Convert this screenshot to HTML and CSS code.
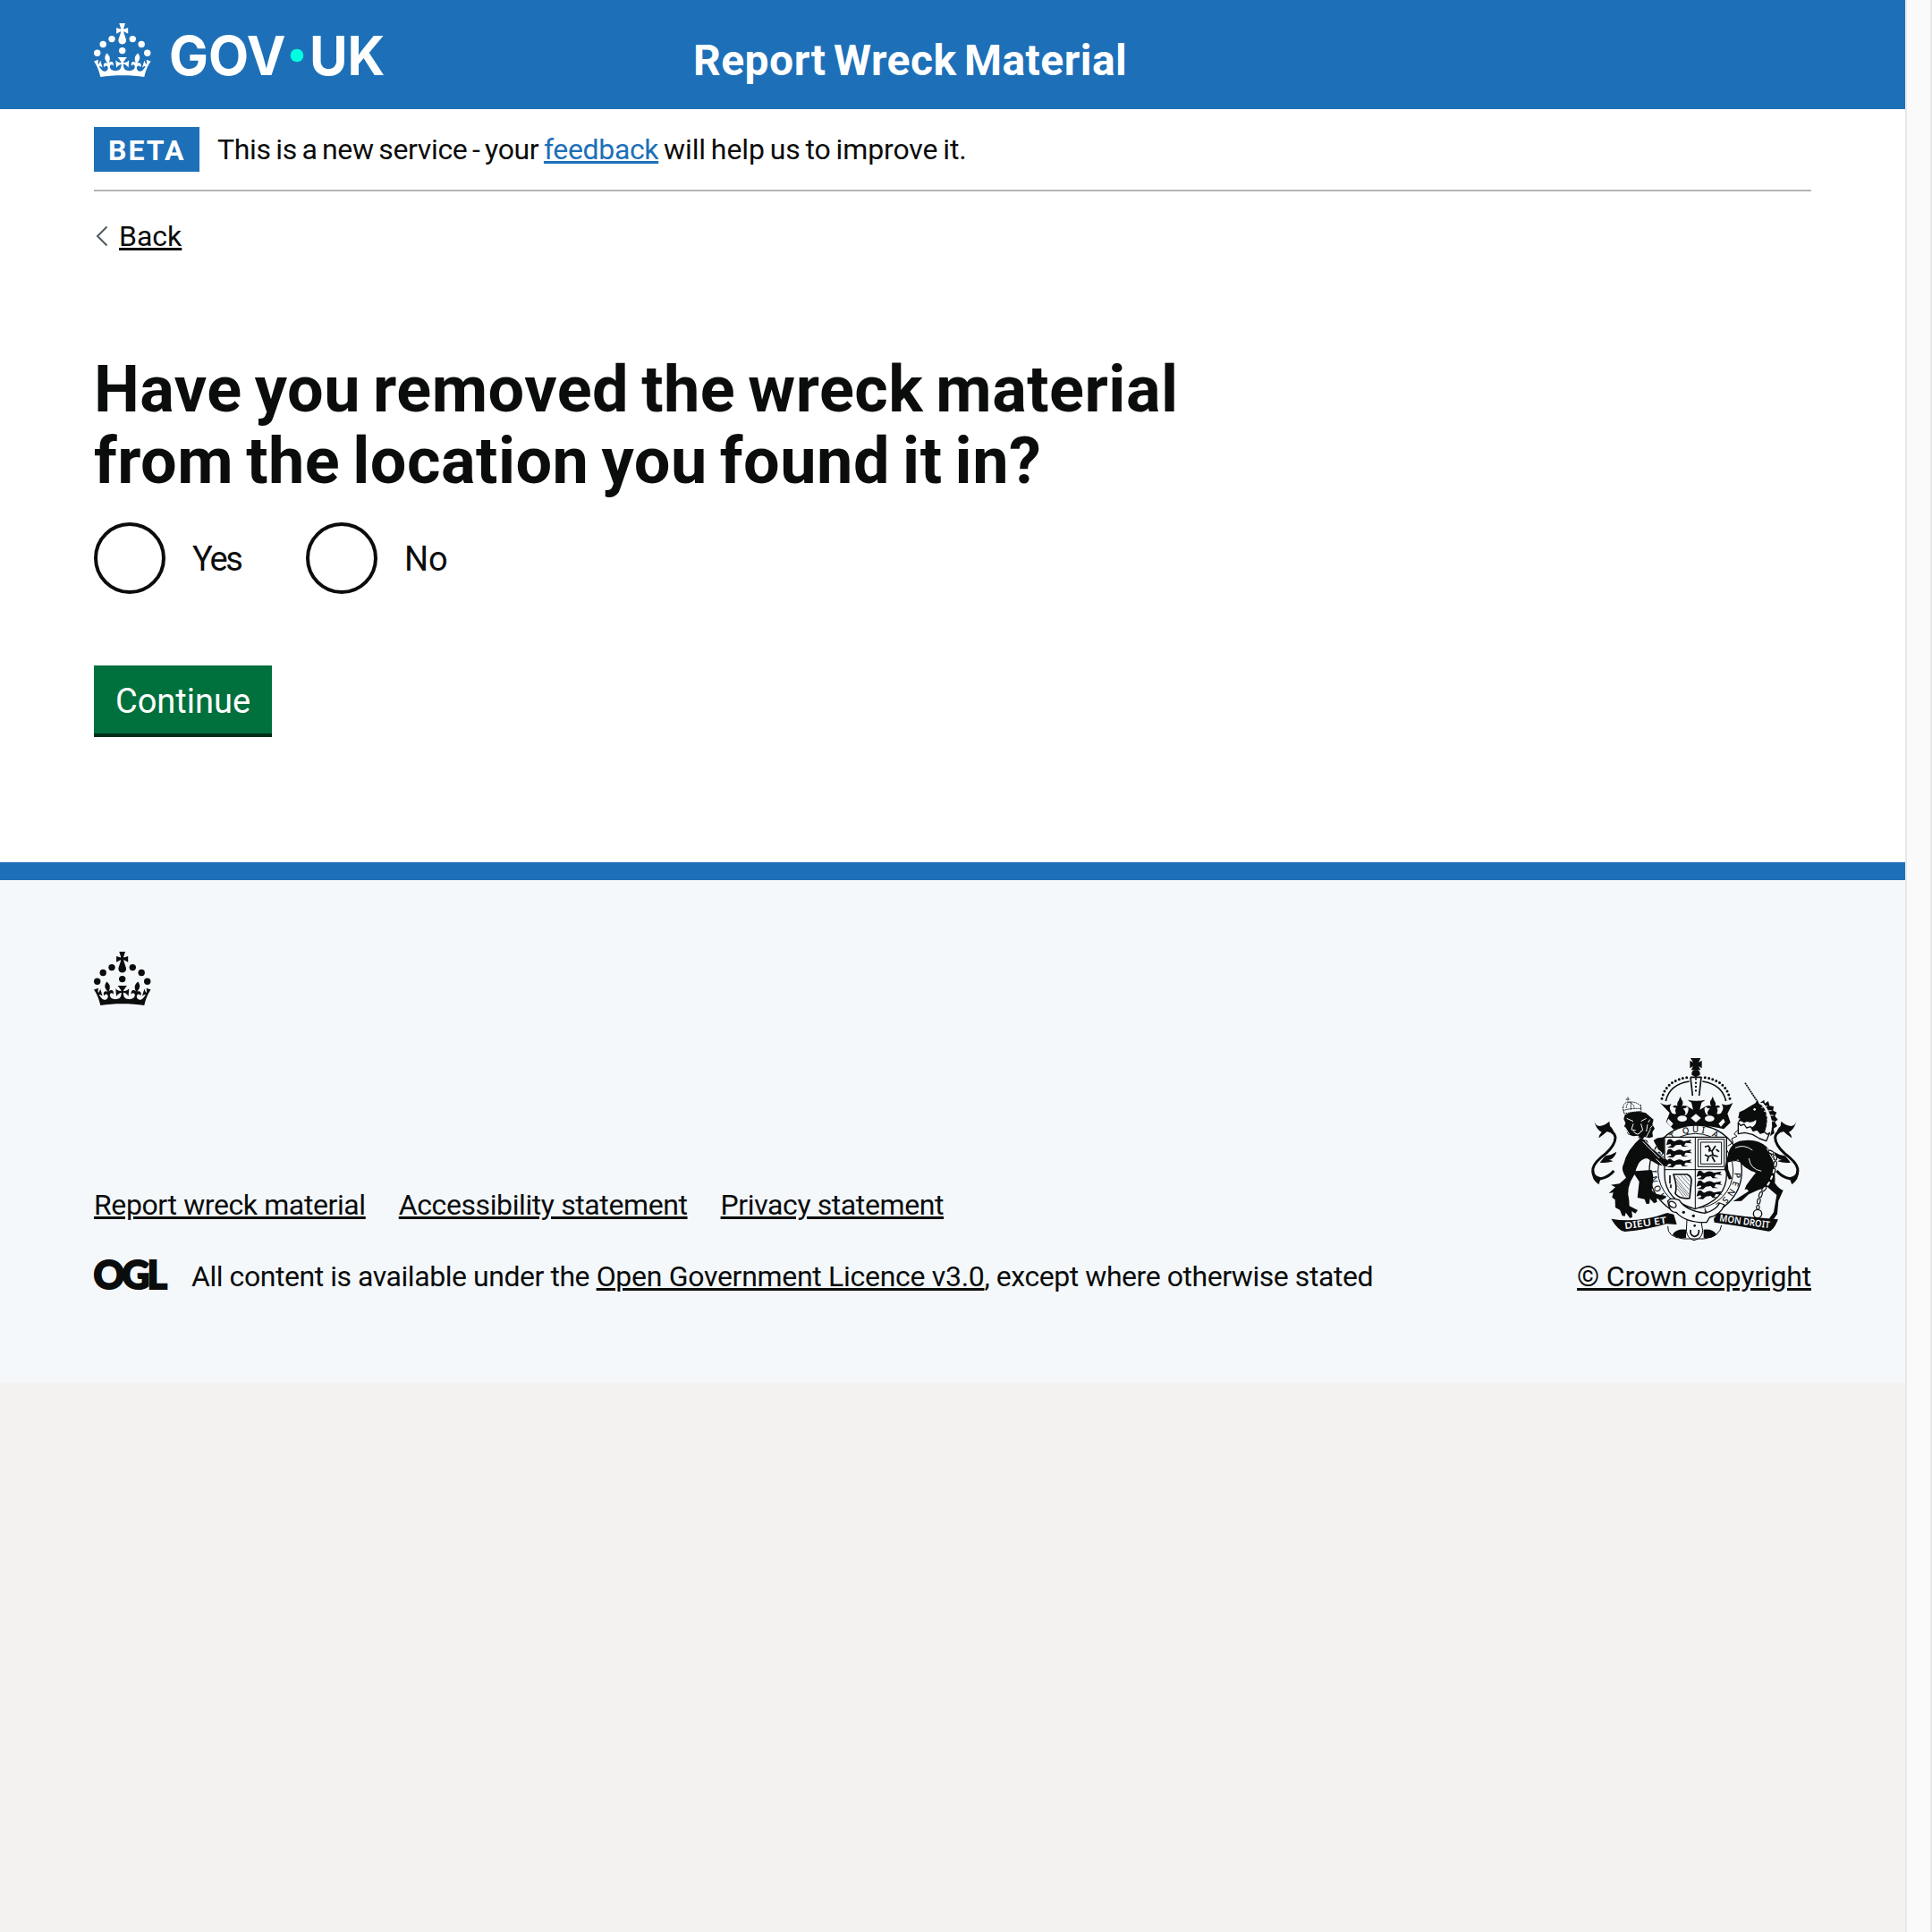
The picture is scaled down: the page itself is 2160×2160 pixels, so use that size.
FILE: index.html
```html
<!DOCTYPE html>
<html lang="en">
<head>
<meta charset="utf-8">
<title>Report Wreck Material</title>
<link rel="stylesheet" href="styles.css">
</head>
<body>
<svg class="symbols" aria-hidden="true">
  <symbol id="crown" viewBox="0 0 64 60">
    <circle cx="20" cy="17.6" r="3.7"/><circle cx="10.2" cy="23.5" r="3.7"/><circle cx="3.7" cy="33.2" r="3.7"/>
    <circle cx="31.7" cy="30.6" r="3.7"/><circle cx="43.3" cy="17.6" r="3.7"/><circle cx="53.2" cy="23.5" r="3.7"/><circle cx="59.7" cy="33.2" r="3.7"/>
    <path d="M33.1,9.8c.2-.1.3-.3.5-.5l4.6,2.4v-6.8l-4.6,1.5c-.1-.2-.3-.3-.5-.5l1.9-5.9h-6.7l1.9,5.9c-.2.1-.3.3-.5.5l-4.6-1.5v6.8l4.6-2.4c.1.2.3.3.5.5l-2.6,8c-.9,2.8,1.2,5.7,4.1,5.7h0c3,0,5.1-2.9,4.1-5.7l-2.6-8ZM37,37.9s-3.4,3.8-4.1,6.1c2.2,0,4.2-.5,6.4-2.8l-.7,8.5c-2-2.8-4.4-4.1-5.7-3.8.1,3.1.5,6.7,5.8,7.2,3.7.3,6.7-1.5,7-3.8.4-2.6-2-4.3-3.7-1.6-1.4-4.5,2.4-6.1,4.9-3.2-1.9-4.5-1.8-7.7,2.4-10.9,3,4,2.6,7.3-1.2,11.1,2.4-1.3,6.2,0,4,4.6-1.2-2.8-3.7-2.2-4.2.2-.3,1.7.7,3.7,3,4.2,1.9.3,4.7-.9,7-5.9-1.3,0-2.4.7-3.9,1.7l2.4-8c.6,2.3,1.4,3.7,2.2,4.5.6-1.6.5-2.8,0-5.3l5,1.8c-2.6,3.6-5.2,8.7-7.3,17.5-7.4-1.1-15.7-1.7-24.5-1.7h0c-8.8,0-17.1.6-24.5,1.7-2.1-8.9-4.7-13.9-7.3-17.5l5-1.8c-.5,2.5-.6,3.7,0,5.3.8-.8,1.6-2.3,2.2-4.5l2.4,8c-1.5-1-2.6-1.7-3.9-1.7,2.3,5,5.2,6.2,7,5.9,2.3-.4,3.3-2.4,3-4.2-.5-2.4-3-3.1-4.2-.2-2.2-4.6,1.6-6,4-4.6-3.7-3.7-4.2-7.1-1.2-11.1,4.2,3.2,4.3,6.4,2.4,10.9,2.5-2.8,6.3-1.3,4.9,3.2-1.8-2.7-4.1-1-3.7,1.6.3,2.3,3.3,4.1,7,3.8,5.4-.5,5.7-4.2,5.8-7.2-1.3-.2-3.7,1-5.7,3.8l-.7-8.5c2.2,2.3,4.2,2.7,6.4,2.8-.7-2.3-4.1-6.1-4.1-6.1h10.6,0Z"/>
  </symbol>
</svg>
<div class="layout">
  <div class="page">
    <header class="header">
      <div class="container header-row">
        <a class="logo">
          <svg class="crown" aria-hidden="true"><use href="#crown"/></svg>
          <svg class="wordmark" viewBox="0 0 245 60" role="img" aria-label="GOV.UK">
            <text x="0" y="58" textLength="130.500" lengthAdjust="spacingAndGlyphs">GOV</text>
            <circle cx="143" cy="36" r="7.3"/>
            <text x="157" y="58" textLength="84.500" lengthAdjust="spacingAndGlyphs">UK</text>
          </svg>
        </a>
        <a class="service-name">Report Wreck Material</a>
      </div>
    </header>
    <div class="container">
      <div class="phase-banner">
        <strong class="tag">BETA</strong>
        <span class="phase-text">This is a new service - your <a class="link">feedback</a><span class="phase-end"> will help us to improve it.</span></span>
      </div>
      <a class="back"><svg class="chevron" viewBox="0 0 14 24" aria-hidden="true"><path d="M12.5 1.5 2 12l10.500 10.500"/></svg><span class="back-text">Back</span></a>
      <main>
        <h1 class="title">Have you removed the wreck material from the location you found it in?</h1>
        <div class="radios">
          <label class="radio"><span class="ring"></span><span class="radio-label radio-yes">Yes</span></label>
          <label class="radio"><span class="ring"></span><span class="radio-label">No</span></label>
        </div>
        <button class="button" type="button">Continue</button>
      </main>
    </div>
    <footer class="footer">
      <div class="container">
        <svg class="crown" aria-hidden="true"><use href="#crown"/></svg>
        <div class="meta">
          <div class="meta-main">
            <nav class="footer-links"><a>Report wreck material</a><a>Accessibility statement</a><a>Privacy statement</a></nav>
            <div class="licence">
              <svg class="ogl" viewBox="0 0 84 40" role="img" aria-label="OGL"><text x="-0.500" y="33.500" textLength="82" lengthAdjust="spacing">OGL</text></svg>
              <span>All content is available under the <a class="licence-link">Open Government Licence v3.0</a>, except where otherwise stated</span>
            </div>
          </div>
          <div class="copyright">
            <svg class="crest" viewBox="0 0 750 660" aria-hidden="true">
              <!-- crown -->
              <path d="M360 24h34l-7 14 11-6v26l-11-7 7 13h-32l7-13-11 7V32l11 6z"/>
              <path d="M364 80q-2-17 14-17t14 17l-14 8z"/>
              <g class="line5"><path d="M360 88h36l-7 62M360 88l7 62"/><path d="M277 168Q290 112 356 102M479 168Q466 112 400 102"/></g>
              <g class="dots"><path d="M264 160Q278 98 350 89"/><path d="M492 160Q478 98 406 89"/></g>
              <path class="dots small" d="M378 94v52"/>
              <path d="M258 174q18 12 38 4-10 12-2 24 6 14 18 8-6-12 0-19-8 0-12-4 8-8 16-2-2-14 4-18 4-10 6-14 2 8 8 16 2 8-3 16 10-6 16 4-4 4-12 4 14 16 4 22 12 0 14-18 2-12-14-10 4-8 16 2l14 8-6-24q-10-6-12-9 12 3 26 3h6q14 0 26-3-2 3-12 9l-6 24 14-8q12-10 16-2-16-2-14 10 2 18 14 18-10-6 4-22-8 0-12-4 6-10 16-4-5-8-3-16 6-8 8-16 2 4 6 14 6 4 4 18 8-6 16 2-4 4-12 4 6 7 0 19 12 6 18-8 8-12-2-24 20 8 38-4l-18 36 10 30-22 22Q378 238 304 264l-26-26 12-30z"/>
              <g class="paper"><ellipse cx="332" cy="227" rx="16" ry="10"/><ellipse cx="424" cy="227" rx="16" ry="10"/><path d="m378 211 17 14-17 14-17-14zM286 227l16 17-8 10-14-16zM470 227l-16 17 8 10 14-16z"/></g>
              <!-- garter and motto -->
              <ellipse class="garter" cx="377" cy="402" rx="155" ry="153"/>
              <ellipse class="garter thin" cx="377" cy="402" rx="126" ry="125"/>
              <path id="motto" class="nofill" d="M284 493A131 129 0 1 1 508 402"/>
              <path id="motto-r" class="nofill" d="M501 362A131 129 0 0 1 390 531"/>
              <text class="motto"><textPath href="#motto" startOffset="4" textLength="100">HONI</textPath></text>
              <text class="motto"><textPath href="#motto" startOffset="150">SO</textPath></text>
              <text class="motto"><textPath href="#motto" startOffset="221" textLength="158">T QUI A</textPath></text>
              <text class="motto"><textPath href="#motto-r" startOffset="0" textLength="222">Y PENSE Y</textPath></text>
              <!-- shield -->
              <path class="shield" d="M273 289h208v125q0 86-106 116-102-30-102-116z"/>
              <path class="line3" d="M376 289v240M273 398h208M385 296h88v92h-88zM394 306h70v73h-70z"/>
              <g id="lions">
                <path d="M284 298q10-6 16 3 6 5 13-1 13-6 24 3l26-5-5 7 8 5-22-2-5 9 14 4h-20l-6-7-16 2-10 9-20-2 15-6-4-5-13 4z"/>
                <path d="M284 331q10-6 16 3 6 5 13-1 13-6 24 3l26-5-5 7 8 5-22-2-5 9 14 4h-20l-6-7-16 2-10 9-20-2 15-6-4-5-13 4z"/>
                <path d="M284 364q10-6 16 3 6 5 13-1 13-6 24 3l26-5-5 7 8 5-22-2-5 9 14 4h-20l-6-7-16 2-10 9-20-2 15-6-4-5-13 4z"/>
              </g>
              <use href="#lions" x="101" y="106"/>
              <path class="line5" d="m408 322 12-4 6 10-4 10M420 330l12 6 12-18M432 336l4 14 16 4M434 348l-14 6-12-6M420 356l-4 14M432 354l10 18M446 330l10 8"/>
              <path class="line5" d="M303 414h46q15 8 14 22l-6 58q-36 3-48-16 8-22-6-64zM291 417v28M294 448v12"/>
              <path class="line1" d="m316 420 40 46M310 426l44 54M312 438l40 48M314 450l32 38M316 462l22 28M328 418l30 34M340 418l18 20"/>
              <!-- belt -->
              <path class="belt" d="M284 503q10-14 38-3 22 36 86 44 38-10 50-34l16 6q-14 34-50 42l-10 17q-70 2-102-34-22 4-28-38z"/>
              <ellipse class="belt" cx="300" cy="515" rx="13" ry="9" transform="rotate(35 300 515)"/>
              <circle cx="337" cy="541" r="5"/><circle cx="370" cy="553" r="5"/>
              <!-- lion -->
              <path d="M140 214l14-6q30-8 56 0l12 10 14 12-4 16 8 14-8 12 2 16-12 4-16-4-8 10-14-14-16 2-18-6-4-14-8-14 4-10-6-14z"/>
              <path d="M182 290 214 300q10 30 40 42l32 28-4 18-30-6-38-22q-18 2-27 16-10 20-11 27l53-4q8 16 5 40l-4 28 14 12 30 6 4 8-16 6-16-4 2 11-10 5-14-15-2 16-10 1-6-16-24-5 6-54-16-24q-30 46-18 86l1 20 28 14-8 11-12-8 2 20-8 4-14-19-3 12-9-1-8-20-15-8-1-26-10-8 4-16-15 2 22-20-15-8 29-4 22-20q-20-30-8-46 10-48 61-92z"/>
              <g class="paper-lines"><path d="M146 226l22 10M212 226l-18 10M168 244l-6 20 14 2M194 244l6 22-12 6M141 256l14 24M216 246l-4 24M168 268q14 22 28 0M226 262l-14 26M152 282l20 14M224 230l-6 10M232 250l-8 10M200 304l56 56M206 300l66 62M244 362l24 22"/></g>
              <path d="m176 262 10-3 10 3-6 12h-8zM236 300q10-10 28-10l8-2v60q-24-20-36-48z"/>
              <g class="line3"><path d="m133 188 4 22 24-4 34-4-2-22M134 200q30-10 60-6" stroke-dasharray="5 2"/><path d="M150 155v14M143 162h14M134 190q2-18 18-19 26-2 40 13M144 192q4-18 9-20 17 4 18 18M160 172v26" stroke-dasharray="4 2"/></g>
              <!-- tails -->
              <g id="tail">
                <path class="tail" d="M62 264q42 0 46 26 0 24-32 54-40 30-43 50-4 30 26 34 26-4 44-26"/>
                <path d="M36 230q2 18 18 22 18-2 34-16l2 16q12 10 16 30-14-14-26-12-10 10-28 22 2-12 10-20-20-10-26-42zM74 352q20-2 38-14-6 22-26 28 8 0 14 4-22 8-44 4zM28 400q8 24 30 32l-6 16q-24-16-24-48z"/>
              </g>
              <use href="#tail" transform="matrix(-1 0 0 1 752 0)"/>
              <!-- unicorn -->
              <path d="m543 107 38 58" stroke-dasharray="6 2" class="line5"/>
              <path d="M524 205l14-6 26-16 14-8 6-12 6 14q20 8 26 40 4 26-6 52l-8 26-34-18-18-16 18-6q14-10 12-24-14 12-30 6l-10 4-12-6-8 4 2-8 6-4-8-2z"/>
              <path d="M593 174l14-10 2 12 12-8 4 16 14 2-2 14 12 6-6 12 10 12-10 8 8 14-12 8 2 16-14 10q12-40 2-66-8-26-26-46z"/>
              <circle class="paper" cx="575" cy="196" r="4"/>
              <g class="paper-lines"><path d="M598 190l20-6M606 202l26-2M612 216l26 0M616 230l24 6M614 244l20 10"/></g>
              <path class="belt" d="m520 240 8 10 12-4 8 12 14-4 8 14 14-4 10 12 14-4 10 8 8-6-12 28-22-8-24-14-26-6-22 4z"/>
              <path class="line3" d="m520 264-14 14 10 8-18 8 5 13-18 12"/>
              <path d="M487 344q8-38 48-43 48-8 80 20 24 26 24 60 6 38 4 62 16 22 28 24l-16 36-4 44-14 20-14-4 16-22 10-58-32-28q-30 10-62 26l-24 22-28 1 52-34q-6-10-14-4 4-16 18-32l20-26q-40-12-60-44l-34 10 2 24 12 30-10 3-16-36z"/>
              <path class="paper-lines" d="M510 325q30-14 58 8M616 326l24 46M556 360q4 36 42 43"/>
              <path class="chain" d="M626 338q24 8 18 42-10 54-30 75-24 18-28 72"/>
              <path class="chain chain-hole" d="M626 338q24 8 18 42-10 54-30 75-24 18-28 72"/>
              <circle class="nofill-line" cx="585" cy="546" r="14"/>
              <!-- ribbons and buckle -->
              <path d="M94 563q90 16 188-20l22 5 10 34-34-2q-68 20-140 26-22-2-46-43zM654 565q-100-6-202-22l-14 20 2 12q92 12 182 30 16 0 32-40z"/>
              <text class="ribbon" transform="translate(140 598) rotate(-8)" textLength="142" lengthAdjust="spacingAndGlyphs">DIEU ET</text>
              <text class="ribbon" transform="translate(456 571) rotate(8)" textLength="170" lengthAdjust="spacingAndGlyphs">MON DROIT</text>
              <path class="line3" d="M284 588q-3 36 52 42h70q54-8 58-46M348 566l-2 38q4 26 26 31 28-6 29-33l-5-28"/>
              <path d="M300 616q10-20 45-17v28q-30 4-45-11zM447 616q-10-20-43-17v28q28 4 43-11z"/>
              <path class="line5" d="M360 600v10q4 12 14 12 12-2 14-14v-8"/><circle cx="374" cy="586" r="4"/>
            </svg>
            <a class="copyright-link">© Crown copyright</a>
          </div>
        </div>
      </div>
    </footer>
  </div>
  <div class="scroll-track"></div>
</div>
</body>
</html>
```
FILE: styles.css
```css
* { box-sizing: border-box; }

body {
  margin: 0;
  background: #f3f2f1;
  color: #0b0c0c;
  font: 32px/40px Roboto, "Liberation Sans", sans-serif;
}

.symbols { display: none; }

.layout {
  display: grid;
  grid-template-columns: 1fr 30px;
  min-height: 2160px;
}

.page { background: linear-gradient(#fff 0 984px, #f3f2f1 984px); }

.scroll-track {
  background: #fafafa;
  border: solid #e8e8e8;
  border-width: 0 2px;
}

.container { margin: 0 105px; }

a {
  color: inherit;
  text-decoration: underline;
  text-decoration-thickness: 3px;
  text-underline-offset: 2px;
}

.crown {
  display: block;
  width: 64px;
  height: 60px;
  fill: currentColor;
}

.header {
  height: 122px;
  background: #1d70b8;
  color: #fff;
}

.header-row {
  display: grid;
  grid-template-columns: 670px 1fr;
  align-items: start;
}

.logo {
  display: flex;
  gap: 20px;
  padding-top: 26px;
}

.wordmark {
  width: 245px;
  height: 60px;
  overflow: visible;
  fill: #fff;
  font: 700 60px Inter, sans-serif;
}

.wordmark circle { fill: #00ffe0; }

.service-name {
  padding-top: 38px;
  font-size: 48px;
  font-weight: 700;
  line-height: 60px;
  letter-spacing: 0.47px;
  word-spacing: -4px;
  text-decoration: none;
}

.phase-banner {
  display: flex;
  align-items: center;
  gap: 20px;
  padding: 20px 0;
  border-bottom: 2px solid #b1b4b6;
}

.phase-text {
  letter-spacing: -0.35px;
  word-spacing: -2px;
}

.phase-end {
  letter-spacing: -0.1px;
  word-spacing: -2px;
}

.tag {
  width: 118px;
  padding: 6px 0 4px 16px;
  background: #1d70b8;
  color: #fff;
  letter-spacing: 2px;
}

.link { color: #1d70b8; }

.back {
  display: flex;
  align-items: center;
  width: max-content;
  margin-top: 30px;
  text-decoration: none;
}

.chevron {
  width: 14px;
  height: 24px;
  margin: 0 12px 0 2px;
  fill: none;
  stroke: #505a5f;
  stroke-width: 2;
}

.back-text {
  text-decoration: underline;
  text-decoration-thickness: 3px;
  text-underline-offset: 2px;
}

main { padding-top: 112px; }

.title {
  width: 1260px;
  margin: 0 0 28px;
  font-size: 72px;
  line-height: 80px;
  letter-spacing: 0.5px;
  word-spacing: -4.3px;
}

.radios {
  display: flex;
  gap: 20px;
}

.radio {
  display: flex;
  align-items: center;
  gap: 30px;
  width: 217px;
  font-size: 38px;
  line-height: 50px;
}

.ring {
  width: 80px;
  height: 80px;
  border: 4px solid #0b0c0c;
  border-radius: 50%;
}

.radio-label { padding-top: 2px; }

.radio-yes { letter-spacing: -2.2px; }

.button {
  display: block;
  width: 199px;
  height: 76px;
  margin: 80px 0 144px;
  padding: 21px 0 17px;
  border: 0;
  background: #00703c;
  box-shadow: 0 4px 0 #002d18;
  color: #fff;
  font: 38px/38px Roboto, "Liberation Sans", sans-serif;
}

.footer {
  height: 582px;
  padding-top: 80px;
  border-top: 20px solid #1d70b8;
  background: #f4f8fb;
}

.meta {
  display: flex;
  justify-content: space-between;
  align-items: flex-end;
  margin-top: 51px;
}

.footer-links {
  display: flex;
  gap: 37px;
  margin-bottom: 40px;
  letter-spacing: -0.4px;
}

.licence {
  display: flex;
  align-items: flex-start;
  gap: 25px;
  letter-spacing: -0.45px;
}

.licence-link { letter-spacing: -0.3px; }

.ogl {
  width: 84px;
  height: 40px;
  overflow: visible;
  fill: #0b0c0c;
  stroke: #0b0c0c;
  stroke-width: 2;
  font: 900 43px Lato, sans-serif;
}

.copyright {
  display: flex;
  flex-direction: column;
  align-items: center;
  gap: 12px;
}

.copyright-link { letter-spacing: -0.18px; }

.crest {
  width: 250px;
  height: 220px;
  margin-left: 2px;
  fill: #0b0c0c;
  stroke-linejoin: round;
}

.line5, .line3, .line1, .nofill-line { fill: none; stroke: #0b0c0c; }
.line5 { stroke-width: 5; }
.line3 { stroke-width: 3; }
.line1 { stroke-width: 1.5; }
.nofill-line { stroke-width: 4; }
.nofill { fill: none; }
.dots { fill: none; stroke: #0b0c0c; stroke-width: 9; stroke-linecap: round; stroke-dasharray: 0 13; }
.small { stroke-width: 7; }
.paper { fill: #f4f8fb; }
.paper-lines { fill: none; stroke: #f4f8fb; stroke-width: 3; }
.garter { fill: #f4f8fb; stroke: #0b0c0c; stroke-width: 4; }
.thin { stroke-width: 3; }
.shield, .belt { fill: #f4f8fb; stroke: #0b0c0c; stroke-width: 4; }
.motto { font: 500 29px "Noto Sans", sans-serif; letter-spacing: 0; }
.ribbon { fill: #f4f8fb; font: 600 32px "Noto Sans", sans-serif; }
.tail { fill: none; stroke: #0b0c0c; stroke-width: 9; }
.chain { fill: none; stroke: #0b0c0c; stroke-width: 13; stroke-linecap: round; stroke-dasharray: 9 14; }
.chain-hole { stroke: #f4f8fb; stroke-width: 6; }
```
